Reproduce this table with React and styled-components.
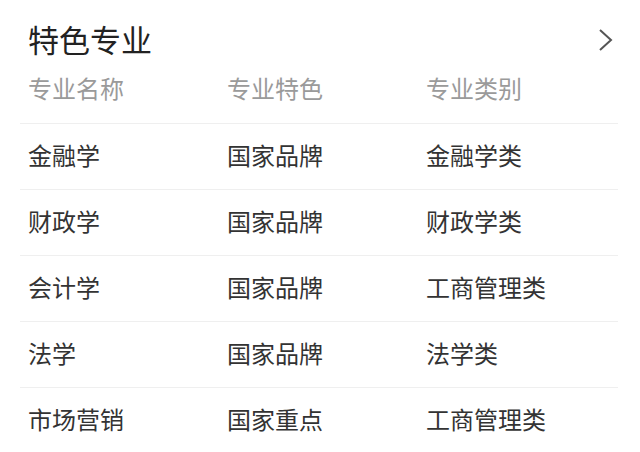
import React from "react";
import styled, { createGlobalStyle } from "styled-components";

const Global = createGlobalStyle`
  html, body { margin: 0; padding: 0; background: #fff; }
  body { font-family: "Noto Sans CJK SC", "Noto Sans", sans-serif; }
`;

const Page = styled.div`
  padding: 21px 22px 0 20px;
  width: 640px;
  box-sizing: border-box;
`;

const TitleBar = styled.div`
  display: flex;
  align-items: center;
  justify-content: space-between;
  height: 36px;
  padding-left: 8px;
`;

const Title = styled.h2`
  margin: 0;
  font-size: 31px;
  font-weight: 400;
  line-height: 36px;
  color: #222;
`;

const Chevron = styled.svg`
  width: 16px;
  height: 22px;
  margin-right: 4px;
  margin-top: 2px;
`;

const Row = styled.div`
  display: grid;
  grid-template-columns: 199px 199px 1fr;
  align-items: ${(p) => (p.$head ? "start" : "center")};
  border-bottom: 1px solid #efefef;
  height: ${(p) => (p.$head ? "66px" : "65px")};
`;

const Cell = styled.div`
  padding-left: 8px;
  font-size: 24px;
  line-height: 32px;
  color: ${(p) => (p.$head ? "#9a9a9a" : "#333")};
  padding-top: ${(p) => (p.$head ? "15px" : "0")};
  padding-bottom: ${(p) => (p.$head ? "0" : "4px")};
`;

const rows = [
  ["金融学", "国家品牌", "金融学类"],
  ["财政学", "国家品牌", "财政学类"],
  ["会计学", "国家品牌", "工商管理类"],
  ["法学", "国家品牌", "法学类"],
  ["市场营销", "国家重点", "工商管理类"],
];

export default function App() {
  return (
    <Page>
      <Global />
      <TitleBar>
        <Title>特色专业</Title>
        <Chevron viewBox="0 0 16 22">
          <polyline points="2,1 13,11 2,21" fill="none" stroke="#555" strokeWidth="2" />
        </Chevron>
      </TitleBar>
      <Row $head>
        <Cell $head>专业名称</Cell>
        <Cell $head>专业特色</Cell>
        <Cell $head>专业类别</Cell>
      </Row>
      {rows.map((r, i) => (
        <Row key={i}>
          {r.map((c, j) => (
            <Cell key={j}>{c}</Cell>
          ))}
        </Row>
      ))}
    </Page>
  );
}
